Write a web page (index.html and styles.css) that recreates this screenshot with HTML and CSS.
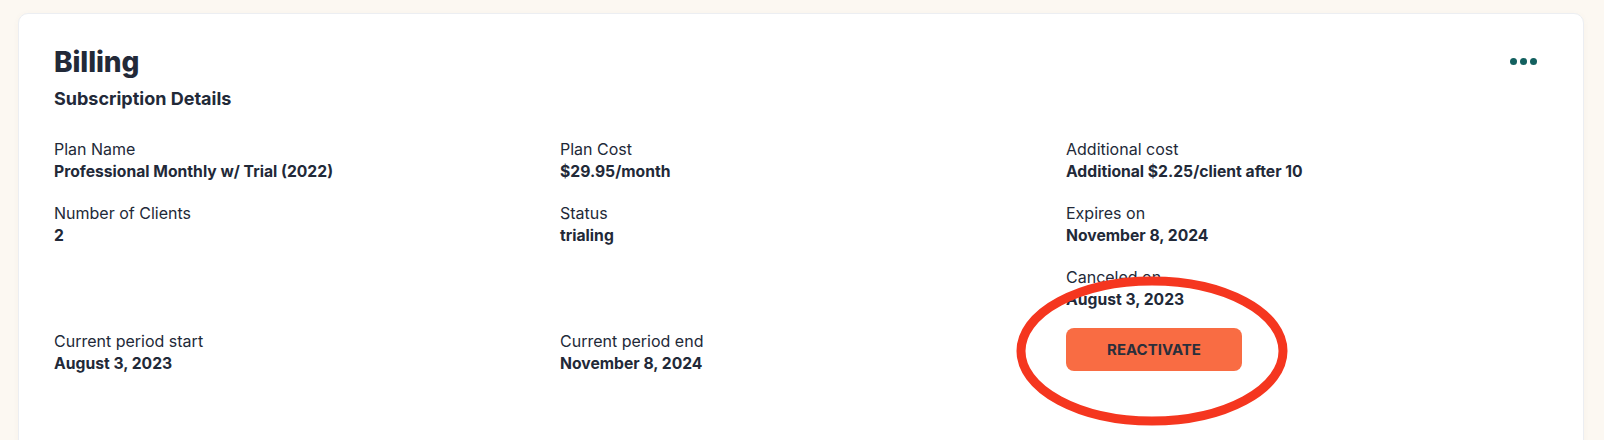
FILE: index.html
```html
<!DOCTYPE html>
<html lang="en">
<head>
    <meta charset="UTF-8">
    <meta name="viewport" content="width=device-width, initial-scale=1.0">
    <title>Billing</title>
    <link rel="stylesheet" href="styles.css">
</head>
<body>
    <section class="card">
        <div class="card-header">
            <div>
                <h1 class="title">Billing</h1>
                <h2 class="subtitle">Subscription Details</h2>
            </div>
            <button class="more-btn" aria-label="More options">
                <span></span>
                <span></span>
                <span></span>
            </button>
        </div>

        <div class="details">
            <div class="field">
                <div class="label">Plan Name</div>
                <div class="value">Professional Monthly w/ Trial (2022)</div>
            </div>
            <div class="field">
                <div class="label">Plan Cost</div>
                <div class="value">$29.95/month</div>
            </div>
            <div class="field">
                <div class="label">Additional cost</div>
                <div class="value">Additional $2.25/client after 10</div>
            </div>

            <div class="field">
                <div class="label">Number of Clients</div>
                <div class="value">2</div>
            </div>
            <div class="field">
                <div class="label">Status</div>
                <div class="value">trialing</div>
            </div>
            <div class="field">
                <div class="label">Expires on</div>
                <div class="value">November 8, 2024</div>
            </div>

            <div class="field"></div>
            <div class="field"></div>
            <div class="field">
                <div class="label">Canceled on</div>
                <div class="value">August 3, 2023</div>
            </div>

            <div class="field">
                <div class="label">Current period start</div>
                <div class="value">August 3, 2023</div>
            </div>
            <div class="field">
                <div class="label">Current period end</div>
                <div class="value">November 8, 2024</div>
            </div>
            <div class="field">
                <button class="reactivate-btn">REACTIVATE</button>
            </div>
        </div>

        <!-- annotation circled around the button -->
        <svg class="annotation" width="290" height="170" viewBox="0 0 290 170">
            <ellipse cx="145" cy="85" rx="131" ry="70" fill="none" stroke="#f5361f" stroke-width="9"/>
        </svg>
    </section>
</body>
</html>
```

FILE: styles.css
```css
body {
    margin: 0;
    padding: 13px 20px 0 18px;
    background: #fcf8f2;
    font-family: Inter, "Noto Sans", sans-serif;
    color: #222938;
    overflow: hidden;
}

.card {
    position: relative;
    background: #fff;
    border: 1px solid #eceef2;
    border-radius: 10px;
    padding: 32px 35px 0 35px;
    min-height: 440px;
    box-shadow: 0 1px 6px rgba(120, 100, 60, 0.04);
}

.card-header {
    display: flex;
    justify-content: space-between;
    align-items: flex-start;
}

.title {
    margin: 0;
    font-size: 28px;
    line-height: 32px;
    font-weight: 800;
    letter-spacing: -0.1px;
}

.subtitle {
    margin: 9px 0 0 0;
    font-size: 18px;
    line-height: 24px;
    font-weight: 700;
}

.more-btn {
    display: flex;
    gap: 3px;
    background: none;
    border: none;
    padding: 12px 11px;
    cursor: pointer;
}

.more-btn span {
    width: 7px;
    height: 7px;
    border-radius: 50%;
    background: #13605f;
}

.details {
    display: grid;
    grid-template-columns: repeat(3, 1fr);
    column-gap: 24px;
    row-gap: 18px;
    margin-top: 27px;
}

.field {
    min-height: 46px;
}

.label {
    font-size: 16px;
    line-height: 22px;
    font-weight: 400;
}

.value {
    font-size: 15.7px;
    line-height: 24px;
    font-weight: 700;
}

.reactivate-btn {
    width: 176px;
    height: 43px;
    margin-top: -2px;
    background: #f96c43;
    border: none;
    border-radius: 8px;
    color: #2a2f3b;
    font-family: Inter, "Noto Sans", sans-serif;
    font-size: 15px;
    font-weight: 700;
    cursor: pointer;
}

.annotation {
    position: absolute;
    left: 988px;
    top: 252px;
}
```
